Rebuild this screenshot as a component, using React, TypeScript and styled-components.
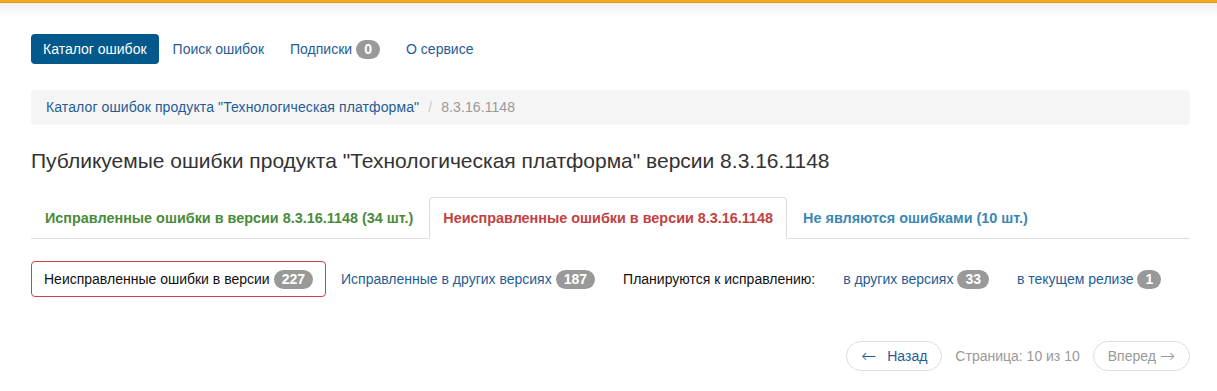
import React from "react";
import styled, { createGlobalStyle } from "styled-components";

const Global = createGlobalStyle`
  html, body { margin: 0; padding: 0; background: #fff; }
  body { font-family: "Liberation Sans", Arial, sans-serif; font-size: 14px; line-height: 20px; color: #333; }
  * { box-sizing: border-box; }
`;

const TopBar = styled.div`
  height: 3px;
  background: #f3a61b;
  border-bottom: 1px solid #e59a0e;
`;

const Shade = styled.div`
  height: 14px;
  background: linear-gradient(#f0f0f0, #fff);
`;

const Page = styled.div`
  padding: 17px 27px 0 31px;
`;

const Nav = styled.nav`
  display: flex;
  align-items: center;
  gap: 2px;
`;

const Pill = styled.a<{ $active?: boolean }>`
  display: flex;
  align-items: center;
  gap: 4px;
  padding: 5px 12px;
  border-radius: 4px;
  text-decoration: none;
  color: ${(p) => (p.$active ? "#fff" : "#1f5d96")};
  background: ${(p) => (p.$active ? "#03588c" : "transparent")};
  cursor: pointer;
`;

const Badge = styled.span`
  display: inline-block;
  min-width: 24px;
  padding: 0 8px;
  height: 19px;
  line-height: 19px;
  font-size: 14px;
  font-weight: bold;
  color: #fff;
  background: #999;
  border-radius: 10px;
  text-align: center;
`;

const Breadcrumb = styled.ol`
  display: flex;
  align-items: center;
  margin: 26px 0 0;
  padding: 7px 15px 8px;
  list-style: none;
  background: #f5f5f5;
  border-radius: 4px;
  font-size: 14px;
  letter-spacing: 0.1px;
`;

const Crumb = styled.li<{ $current?: boolean }>`
  color: ${(p) => (p.$current ? "#999" : "#1f5d96")};
`;

const CrumbSep = styled.li`
  padding: 0 9px;
  color: #ccc;
`;

const Title = styled.h2`
  margin: 23px 0 0;
  font-size: 21px;
  line-height: 26px;
  font-weight: normal;
  color: #333;
`;

const Tabs = styled.ul`
  display: flex;
  margin: 23px 0 0;
  padding: 0;
  list-style: none;
  border-bottom: 1px solid #ddd;
`;

const Tab = styled.li<{ $active?: boolean; $color: string }>`
  margin: 0 2px -1px 0;
  padding: 10px 13px;
  font-size: 14.4px;
  font-weight: bold;
  color: ${(p) => p.$color};
  border: 1px solid ${(p) => (p.$active ? "#ddd" : "transparent")};
  border-bottom-color: ${(p) => (p.$active ? "#fff" : "transparent")};
  border-radius: 4px 4px 0 0;
  background: ${(p) => (p.$active ? "#fff" : "transparent")};
`;

const Filters = styled.div`
  display: flex;
  align-items: center;
  gap: 2px;
  margin-top: 22px;
`;

const Filter = styled.span<{ $active?: boolean; $link?: boolean }>`
  display: flex;
  align-items: center;
  gap: 4px;
  padding: 7px 12px;
  border: 1px solid ${(p) => (p.$active ? "#c9444a" : "transparent")};
  border-radius: 4px;
  font-size: 14px;
  color: ${(p) => (p.$link ? "#1f5d96" : "#111")};
`;

const Pager = styled.div`
  display: flex;
  justify-content: flex-end;
  align-items: center;
  gap: 13px;
  margin-top: 44px;
`;

const PageBtn = styled.span<{ $disabled?: boolean; $gap: number }>`
  display: flex;
  align-items: center;
  gap: ${(p) => p.$gap}px;
  height: 30px;
  padding: 0 14px;
  border: 1px solid #ddd;
  border-radius: 15px;
  font-size: 14px;
  color: ${(p) => (p.$disabled ? "#999" : "#1f5d96")};
`;

const Arrow = styled.span`
  font-family: "DejaVu Sans", sans-serif;
  font-size: 18px;
  line-height: 1;
  font-weight: 300;
`;

const PageInfo = styled.span`
  color: #999;
  font-size: 14px;
`;

export default function App() {
  return (
    <>
      <Global />
      <TopBar />
      <Shade />
      <Page>
        <Nav>
          <Pill $active>Каталог ошибок</Pill>
          <Pill>Поиск ошибок</Pill>
          <Pill>
            Подписки <Badge>0</Badge>
          </Pill>
          <Pill>О сервисе</Pill>
        </Nav>
        <Breadcrumb>
          <Crumb>Каталог ошибок продукта "Технологическая платформа"</Crumb>
          <CrumbSep>/</CrumbSep>
          <Crumb $current>8.3.16.1148</Crumb>
        </Breadcrumb>
        <Title>Публикуемые ошибки продукта "Технологическая платформа" версии 8.3.16.1148</Title>
        <Tabs>
          <Tab $color="#4a8a3b">Исправленные ошибки в версии 8.3.16.1148 (34 шт.)</Tab>
          <Tab $active $color="#c2413f">Неисправленные ошибки в версии 8.3.16.1148</Tab>
          <Tab $color="#3a87b5">Не являются ошибками (10 шт.)</Tab>
        </Tabs>
        <Filters>
          <Filter $active>
            Неисправленные ошибки в версии <Badge>227</Badge>
          </Filter>
          <Filter $link>
            Исправленные в других версиях <Badge>187</Badge>
          </Filter>
          <Filter>Планируются к исправлению:</Filter>
          <Filter $link>
            в других версиях <Badge>33</Badge>
          </Filter>
          <Filter $link>
            в текущем релизе <Badge>1</Badge>
          </Filter>
        </Filters>
        <Pager>
          <PageBtn $gap={11}>
            <Arrow>←</Arrow>
            <span>Назад</span>
          </PageBtn>
          <PageInfo>Страница: 10 из 10</PageInfo>
          <PageBtn $disabled $gap={4}>
            <span>Вперед</span>
            <Arrow>→</Arrow>
          </PageBtn>
        </Pager>
      </Page>
    </>
  );
}
